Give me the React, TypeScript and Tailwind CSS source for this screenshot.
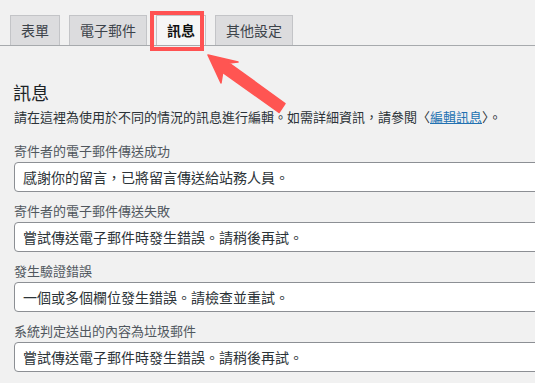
import React from "react";

const tabs = [
  { label: "表單", active: false },
  { label: "電子郵件", active: false },
  { label: "訊息", active: true },
  { label: "其他設定", active: false },
];

const fields = [
  { label: "寄件者的電子郵件傳送成功", value: "感謝你的留言，已將留言傳送給站務人員。" },
  { label: "寄件者的電子郵件傳送失敗", value: "嘗試傳送電子郵件時發生錯誤。請稍後再試。" },
  { label: "發生驗證錯誤", value: "一個或多個欄位發生錯誤。請檢查並重試。" },
  { label: "系統判定送出的內容為垃圾郵件", value: "嘗試傳送電子郵件時發生錯誤。請稍後再試。" },
];

export default function App() {
  return (
    <div
      className="relative w-[535px] h-[383px] overflow-hidden bg-[#f1f1f1] text-[#3c434a]"
      style={{ fontFamily: '"Noto Sans CJK TC", "Noto Sans", sans-serif' }}
    >
      <div className="flex gap-[9px] pl-[10px] pt-[15px] border-b border-[#a7aaad]">
        {tabs.map((t) => (
          <div
            key={t.label}
            className={
              t.active
                ? "h-[30px] px-[10px] border border-b-0 border-[#c3c4c7] bg-[#f6f6f6] text-[14px] leading-[28px] font-bold text-[#111] -mb-px"
                : "h-[30px] px-[10px] border border-b-0 border-[#c3c4c7] bg-[#dcdcde] text-[14px] leading-[28px] text-[#3c434a]"
            }
          >
            {t.label}
          </div>
        ))}
      </div>

      <div className="pl-[14px] pt-[34px]">
        <h2 className="text-[18px] leading-[24px] text-[#1d2327] -ml-[1px]">訊息</h2>
        <p className="mt-[4px] text-[13px] leading-[18px] text-[#2c3338]">
          請在這裡為使用於不同的情況的訊息進行編輯。如需詳細資訊，請參閱〈
          <span className="text-[#2271b1] underline">編輯訊息</span>〉。
        </p>
        <div className="mt-[16px] flex flex-col gap-[10px]">
          {fields.map((f, i) => (
            <div key={i} className="flex flex-col gap-[2px]">
              <div className="text-[13px] leading-[18px] text-[#50575e]">{f.label}</div>
              <div className="w-[560px] h-[30px] rounded-[4px] border border-[#8c8f94] bg-white pl-[8px] text-[14px] leading-[28px] text-[#2c3338]">
                {f.value}
              </div>
            </div>
          ))}
        </div>
      </div>

      <div className="absolute left-[150px] top-[11px] w-[54px] h-[40px] border-[4px] border-[#ff5252]" />

      <svg className="absolute left-0 top-0" width="535" height="383" viewBox="0 0 535 383">
        <polygon
          points="208,55 238,62 229,63 285,103.5 279,112.5 222.7,72.3 221,83"
          fill="#ff5552"
          stroke="#ff5552"
          strokeWidth="1.5"
          strokeLinejoin="round"
        />
      </svg>
    </div>
  );
}
